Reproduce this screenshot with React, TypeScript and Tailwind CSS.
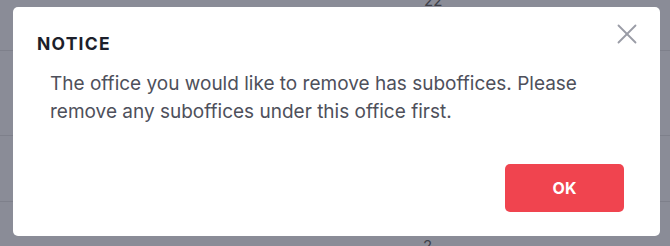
import { X } from 'lucide-react';

export default function App() {
  return (
    <div
      className="relative w-[670px] h-[246px] overflow-hidden bg-[#8a8c97]"
      style={{ fontFamily: 'Inter, "Noto Sans", sans-serif' }}
    >
      {/* ── Backdrop table (dimmed) ─────────────────────── */}
      <div className="flex flex-col">
        <div className="h-[51px] border-b border-[#7e808b] relative">
          <span className="absolute left-[424px] top-[-10px] text-[15px] text-[#3f414a]">22</span>
        </div>
        <div className="h-[85px] border-b border-[#7e808b]" />
        <div className="h-[66px] border-b border-[#7e808b]" />
        <div className="h-[44px] relative">
          <span className="absolute left-[423px] top-[33px] text-[15px] text-[#3f414a]">2</span>
        </div>
      </div>

      {/* ── Modal ───────────────────────────────────────── */}
      <div className="absolute left-[13px] top-[7px] w-[647px] h-[229px] rounded-[5px] bg-white flex flex-col pt-[25px] pl-[24px] pr-[36px] pb-[24px]">
        <button className="absolute right-[16px] top-[10px] text-[#9a9ca6]">
          <X style={{ width: 34, height: 34 }} strokeWidth={1.3} />
        </button>

        <h2 className="text-[17.5px] leading-[24px] font-bold tracking-[0.07em] text-[#1d1f2b]">NOTICE</h2>

        <p className="mt-[14px] pl-[13px] text-[19px] leading-[28px] text-[#4e505b]">
          The office you would like to remove has suboffices. Please
          <br />
          remove any suboffices under this office first.
        </p>

        <div className="mt-auto flex justify-end">
          <button className="w-[119px] h-[48px] rounded-[5px] bg-[#f0444f] text-white text-[16px] font-bold">
            OK
          </button>
        </div>
      </div>
    </div>
  );
}
